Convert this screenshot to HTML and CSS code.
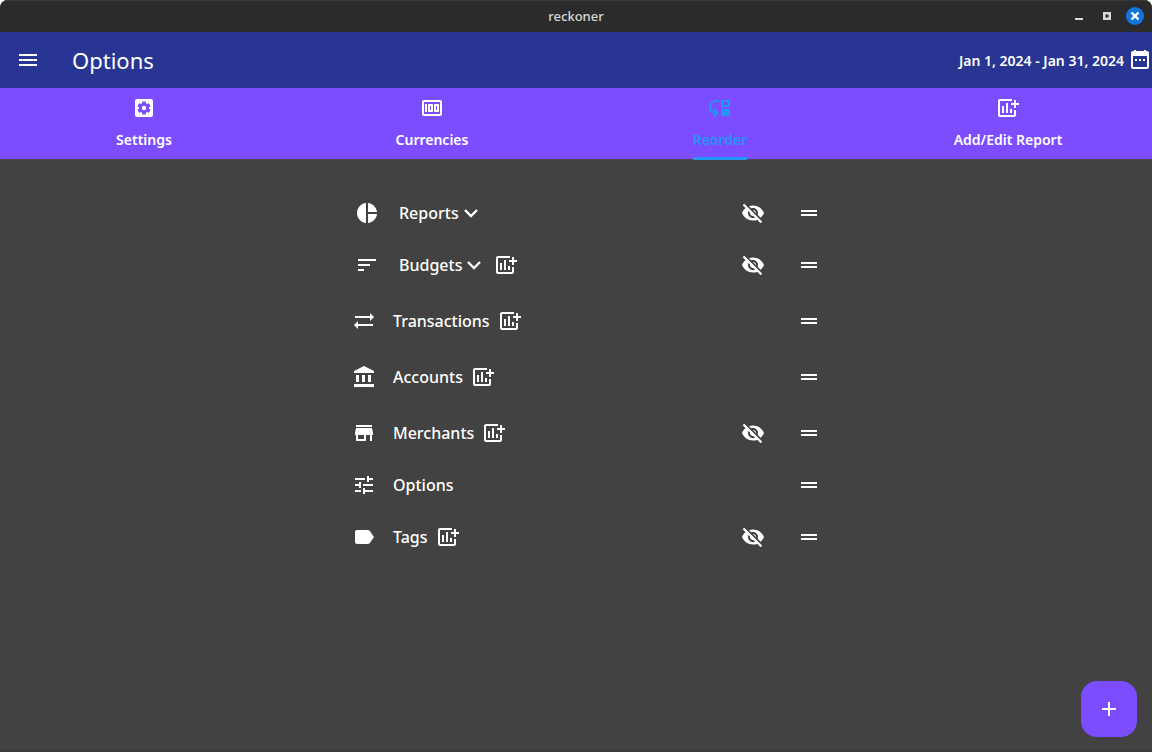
FILE: index.html
```html
<!DOCTYPE html>
<html lang="en">
<head>
<meta charset="utf-8">
<title>reckoner</title>
<link rel="stylesheet" href="styles.css">
</head>
<body>
<svg class="sprite" aria-hidden="true">
  <symbol id="add-report" viewBox="0 0 24 24"><path d="M18 4h2v3h3v2h-3v3h-2V9h-3V7h3zM6 10h2v7H6zM10 7h2v10h-2zM14 13h2v4h-2zM18 14h2v5c0 1.1-.9 2-2 2H4c-1.1 0-2-.9-2-2V5c0-1.1.9-2 2-2h12v2H4v14h14z"/></symbol>
  <symbol id="hide" viewBox="0 0 24 24"><path d="M12 7c2.76 0 5 2.24 5 5 0 .65-.13 1.26-.36 1.83l2.92 2.92c1.51-1.26 2.7-2.89 3.43-4.75-1.73-4.39-6-7.5-11-7.5-1.4 0-2.74.25-3.98.7l2.16 2.16C10.74 7.13 11.35 7 12 7zM2 4.27l2.28 2.28.46.46C3.08 8.3 1.78 10.02 1 12c1.73 4.39 6 7.5 11 7.5 1.55 0 3.03-.3 4.38-.84l.42.42L19.73 22 21 20.73 3.27 3 2 4.27zM7.53 9.8l1.55 1.55c-.05.21-.08.43-.08.65 0 1.66 1.34 3 3 3 .22 0 .44-.03.65-.08l1.55 1.55c-.67.33-1.41.53-2.2.53-2.76 0-5-2.24-5-5 0-.79.2-1.53.53-2.2zm4.31-.78l3.15 3.15.02-.16c0-1.66-1.34-3-3-3l-.17.01z"/><path d="M2.500 3.500l17.700 17.700" stroke="currentColor" stroke-width="2"/></symbol>
  <symbol id="drag" viewBox="0 0 24 24"><path d="M20 9H4v2h16V9zM4 15h16v-2H4v2z"/></symbol>
  <symbol id="chevron" viewBox="0 0 24 24"><path d="M6 9l6 6 6-6" fill="none" stroke="currentColor" stroke-width="2.400"/></symbol>
</svg>
<div class="window">
  <header class="titlebar">
    <span class="window-title">reckoner</span>
    <div class="window-controls">
      <button class="window-button" aria-label="Minimize"><svg viewBox="0 0 18 18"><path d="M5 11h8v2H5z"/></svg></button>
      <button class="window-button" aria-label="Maximize"><svg viewBox="0 0 18 18"><path fill-rule="evenodd" d="M5 5h8v8H5zM7.500 7.500v3h3v-3z"/></svg></button>
      <button class="window-button close" aria-label="Close"><svg viewBox="0 0 18 18"><path d="M5.500 5.500l7 7m0-7l-7 7" stroke="currentColor" stroke-width="2.400"/></svg></button>
    </div>
  </header>
  <div class="appbar">
    <button class="icon-button" aria-label="Menu"><svg class="icon" viewBox="0 0 24 24"><path d="M3 18h18v-2H3v2zm0-5h18v-2H3v2zm0-7v2h18V6H3z"/></svg></button>
    <h1 class="page-title">Options</h1>
    <button class="date-button">Jan 1, 2024 - Jan 31, 2024
      <svg class="icon" viewBox="0 0 24 24"><path d="M7 11h2v2H7v-2zm14-6v14c0 1.100-.9 2-2 2H5c-1.110 0-2-.9-2-2V5c0-1.100.890-2 2-2h1V2h2v1h8V2h2v1h1c1.100 0 2 .9 2 2zM5 8v11h14V8H5zm10 5h2v-2h-2v2zm-4 0h2v-2h-2v2z"/></svg>
    </button>
  </div>
  <nav class="tabs">
    <button class="tab">
      <svg class="icon" viewBox="0 0 24 24"><rect x="3" y="3" width="18" height="18" rx="2"/><g class="gear"><circle cx="12" cy="12" r="4.900"/><path id="tooth" d="M10.300 5.400h3.400l.5 3v7.200l-.5 3h-3.400l-.5-3V8.400z"/><use href="#tooth" transform="rotate(60 12 12)"/><use href="#tooth" transform="rotate(120 12 12)"/></g><circle cx="12" cy="12" r="2.200"/></svg>
      <span class="tab-label">Settings</span>
    </button>
    <button class="tab">
      <svg class="icon" viewBox="0 0 24 24"><path d="M15 16h3c.55 0 1-.45 1-1V9c0-.55-.45-1-1-1h-3c-.55 0-1 .45-1 1v6c0 .55.45 1 1 1zm1-6h1v4h-1v-4zM9 16h3c.55 0 1-.45 1-1V9c0-.55-.45-1-1-1H9c-.55 0-1 .45-1 1v6c0 .55.45 1 1 1zm1-6h1v4h-1v-4zM5 8h2v8H5zM20 4H4c-1.110 0-2 .89-2 2v12c0 1.110.89 2 2 2h16c1.110 0 2-.89 2-2V6c0-1.110-.89-2-2-2zm0 14H4V6h16v12z"/></svg>
      <span class="tab-label">Currencies</span>
    </button>
    <button class="tab active">
      <svg class="icon" viewBox="0 0 24 24"><path d="M11 5H9C5 5 2 7.500 2 11.300S4.700 17 8.500 17M5.500 13l4 4-4 4" fill="none" stroke="currentColor" stroke-width="2"/><path d="M13 4v7h9V4h-9zm7 5h-5V6h5v3zM13 13h9v7h-9z"/></svg>
      <span class="tab-label">Reorder</span>
    </button>
    <button class="tab">
      <svg class="icon"><use href="#add-report"/></svg>
      <span class="tab-label">Add/Edit Report</span>
    </button>
  </nav>
  <main class="content">
    <ul class="list">
      <li class="row expandable compact">
        <svg class="icon" viewBox="0 0 24 24"><path d="M11 2v20c-5.070-.5-9-4.790-9-10s3.930-9.500 9-10zm2.030 0v8.990H22c-.47-4.740-4.240-8.520-8.970-8.990zm0 11.010V22c4.740-.47 8.500-4.250 8.970-8.990h-8.970z"/></svg>
        <button class="row-name">Reports<svg class="icon"><use href="#chevron"/></svg></button>
        <button class="row-action hide" aria-label="Hide Reports"><svg class="icon"><use href="#hide"/></svg></button>
        <button class="row-action drag" aria-label="Move Reports"><svg class="icon"><use href="#drag"/></svg></button>
      </li>
      <li class="row expandable">
        <svg class="icon" viewBox="0 0 24 24"><path d="M3 18h6v-2H3v2zM3 6v2h18V6H3zm0 7h12v-2H3v2z"/></svg>
        <button class="row-name">Budgets<svg class="icon"><use href="#chevron"/></svg></button>
        <button class="row-action" aria-label="Add Budgets report"><svg class="icon"><use href="#add-report"/></svg></button>
        <button class="row-action hide" aria-label="Hide Budgets"><svg class="icon"><use href="#hide"/></svg></button>
        <button class="row-action drag" aria-label="Move Budgets"><svg class="icon"><use href="#drag"/></svg></button>
      </li>
      <li class="row">
        <svg class="icon" viewBox="0 0 24 24"><path d="M3 7h15V4l4 4-4 4V9H3zM21 15H6v-3l-4 4 4 4v-3h15z"/></svg>
        <span class="row-name">Transactions</span>
        <button class="row-action" aria-label="Add Transactions report"><svg class="icon"><use href="#add-report"/></svg></button>
        <button class="row-action drag" aria-label="Move Transactions"><svg class="icon"><use href="#drag"/></svg></button>
      </li>
      <li class="row">
        <svg class="icon" viewBox="0 0 24 24"><path d="M4 10v7h3v-7H4zm6 0v7h3v-7h-3zM2 22h20v-3H2v3zm14-12v7h3v-7h-3zM12 1L2 6v2h20V6L12 1z"/></svg>
        <span class="row-name">Accounts</span>
        <button class="row-action" aria-label="Add Accounts report"><svg class="icon"><use href="#add-report"/></svg></button>
        <button class="row-action drag" aria-label="Move Accounts"><svg class="icon"><use href="#drag"/></svg></button>
      </li>
      <li class="row">
        <svg class="icon" viewBox="0 0 24 24"><path d="M20 4H4v2h16V4zm1 10v-2l-1-5H4l-1 5v2h1v6h10v-6h4v6h2v-6h1zm-9 4H6v-4h6v4z"/></svg>
        <span class="row-name">Merchants</span>
        <button class="row-action" aria-label="Add Merchants report"><svg class="icon"><use href="#add-report"/></svg></button>
        <button class="row-action hide" aria-label="Hide Merchants"><svg class="icon"><use href="#hide"/></svg></button>
        <button class="row-action drag" aria-label="Move Merchants"><svg class="icon"><use href="#drag"/></svg></button>
      </li>
      <li class="row compact">
        <svg class="icon" viewBox="0 0 24 24"><path d="M3 17v2h6v-2H3zM3 5v2h10V5H3zm10 16v-2h8v-2h-8v-2h-2v6h2zM7 9v2H3v2h4v2h2V9H7zm14 4v-2H11v2h10zm-6-4h2V7h4V5h-4V3h-2v6z"/></svg>
        <span class="row-name">Options</span>
        <button class="row-action drag" aria-label="Move Options"><svg class="icon"><use href="#drag"/></svg></button>
      </li>
      <li class="row">
        <svg class="icon" viewBox="0 0 24 24"><path d="M17.630 5.840C17.270 5.330 16.670 5 16 5L5 5.010C3.900 5.010 3 5.900 3 7v10c0 1.100.9 1.990 2 1.990L16 19c.67 0 1.270-.33 1.630-.84L22 12l-4.370-6.160z"/></svg>
        <span class="row-name">Tags</span>
        <button class="row-action" aria-label="Add Tags report"><svg class="icon"><use href="#add-report"/></svg></button>
        <button class="row-action hide" aria-label="Hide Tags"><svg class="icon"><use href="#hide"/></svg></button>
        <button class="row-action drag" aria-label="Move Tags"><svg class="icon"><use href="#drag"/></svg></button>
      </li>
    </ul>
  </main>
  <button class="fab" aria-label="Add"><svg class="icon" viewBox="0 0 24 24"><path d="M19 13h-6v6h-2v-6H5v-2h6V5h2v6h6v2z"/></svg></button>
</div>
</body>
</html>
```
FILE: styles.css
```css
* { box-sizing: border-box; }

body {
  margin: 0;
  background: #fff;
  color: #fff;
  font-family: "Noto Sans", "Open Sans", sans-serif;
  font-size: 16px;
  font-weight: 500;
}

button {
  margin: 0;
  padding: 0;
  border: 0;
  background: none;
  color: inherit;
  font: inherit;
  cursor: pointer;
}

.sprite { display: none; }

.icon {
  display: block;
  flex: none;
  width: 24px;
  height: 24px;
  fill: currentColor;
}

.gear { fill: #7c4dff; }

.window {
  display: flex;
  flex-direction: column;
  min-height: 100vh;
  overflow: hidden;
  border-radius: 8px 8px 0 0;
  border-bottom: 2px solid #3a3a3a;
  background: #424242;
}

.titlebar {
  display: grid;
  grid-template-columns: 1fr auto 1fr;
  align-items: center;
  height: 32px;
  padding: 0 8px;
  background: #2b2b2b;
  box-shadow: inset 0 1px #3a3a3a;
  color: #d8d8d8;
}

.window-title {
  grid-column: 2;
  font-size: 13px;
}

.window-controls {
  display: flex;
  justify-content: flex-end;
  gap: 10px;
}

.window-button {
  width: 18px;
  height: 18px;
  border-radius: 50%;
}

.window-button svg {
  display: block;
  fill: currentColor;
}

.window-button.close {
  background: #1177dd;
  color: #fff;
}

.appbar {
  display: flex;
  align-items: center;
  height: 56px;
  background: #283593;
}

.icon-button {
  display: grid;
  place-items: center;
  width: 56px;
  height: 56px;
}

.page-title {
  flex: 1;
  margin: 0 16px;
  font-size: 22px;
  font-weight: 400;
}

.date-button {
  display: flex;
  align-items: center;
  gap: 4px;
  font-size: 14px;
  font-weight: 600;
}

.tabs {
  display: grid;
  grid-template-columns: repeat(4, 1fr);
  height: 72px;
  border-bottom: 1px solid #49454f;
  background: #7c4dff;
}

.tab {
  display: flex;
  flex-direction: column;
  align-items: center;
  gap: 8px;
  padding-top: 8px;
  font-size: 14px;
  font-weight: 600;
}

.tab-label {
  height: 32px;
  line-height: 24px;
}

.tab.active { color: #2196f3; }

.tab.active .tab-label {
  border-bottom: 3px solid #2196f3;
}

.content {
  flex: 1;
  padding-top: 29px;
}

.list {
  max-width: 500px;
  margin: 0 auto;
  padding: 0 5px 0 26px;
  list-style: none;
}

.row {
  display: flex;
  align-items: center;
  gap: 8px;
  height: 56px;
}

.row.compact { height: 48px; }

.row.expandable { padding-left: 3px; }

.row-name {
  display: flex;
  align-items: center;
  margin-left: 9px;
  font-size: 16px;
  font-weight: 500;
}

.expandable .row-name { margin-left: 12px; }

.drag { margin-left: auto; }

.hide {
  margin-right: 24px;
  margin-left: auto;
}

.hide + .drag { margin-left: 0; }

.fab {
  position: fixed;
  right: 15px;
  bottom: 15px;
  display: grid;
  place-items: center;
  width: 56px;
  height: 56px;
  border-radius: 16px;
  background: #7c4dff;
}
```
